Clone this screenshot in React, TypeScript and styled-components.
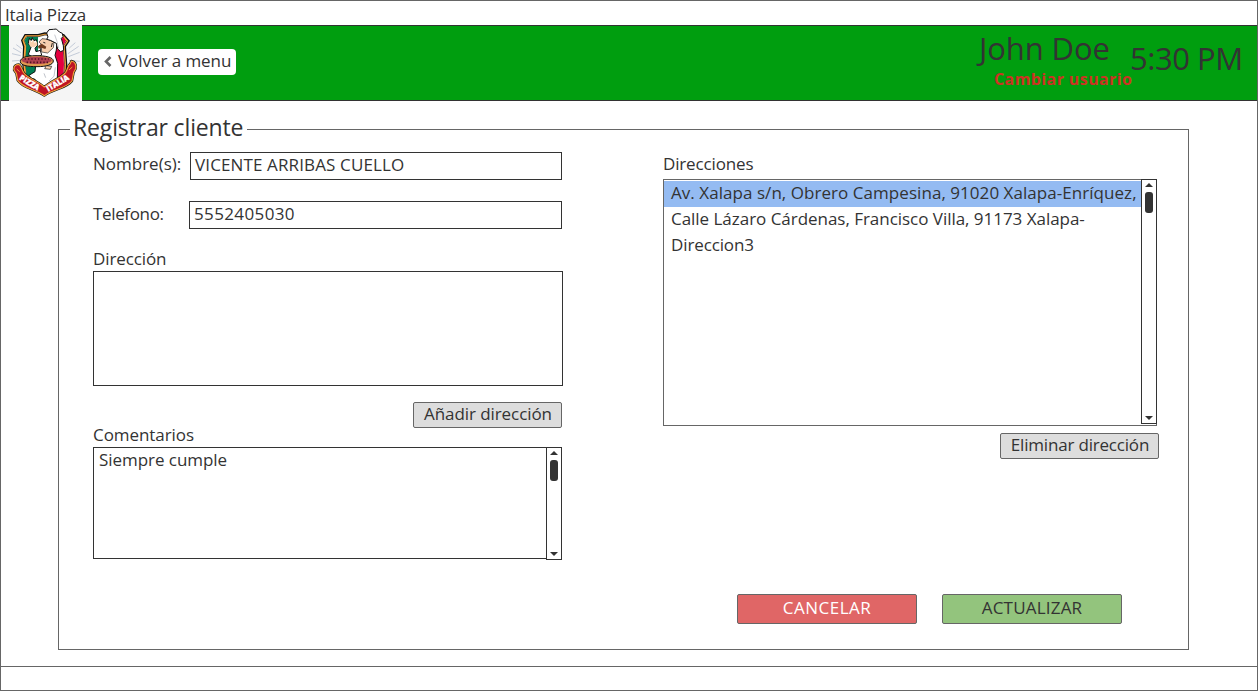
import React from "react";
import styled, { createGlobalStyle } from "styled-components";

const GlobalStyle = createGlobalStyle`
  *, *::before, *::after { box-sizing: border-box; }
  body { margin: 0; background: #fff; }
`;

const ink = "#333333";
const line = "#666666";

const Window = styled.div`
  display: flex;
  flex-direction: column;
  width: 1258px;
  height: 691px;
  border: 1px solid ${line};
  background: #fff;
  color: ${ink};
  font: 17px/20px "Open Sans", "Noto Sans", sans-serif;
  white-space: nowrap;
`;

const TitleBar = styled.div`
  flex: none;
  height: 24px;
  padding: 4px 0 0 4px;
  letter-spacing: -0.13px;
`;

const Header = styled.header`
  flex: none;
  display: flex;
  align-items: flex-start;
  height: 76px;
  padding-left: 8px;
  background: #009e0f;
  box-shadow: inset 0 1px ${ink}, inset 0 -1px ${ink};
`;

const Logo = styled.svg`
  flex: none;
  display: block;
  width: 73px;
  height: 76px;
`;

const BackButton = styled.button`
  display: flex;
  gap: 6px;
  width: 138px;
  height: 26px;
  margin: 24px 0 0 16px;
  padding: 2px 0 0 6px;
  border: 0;
  border-radius: 4px;
  background: #fff;
  color: ${ink};
  font: inherit;
  letter-spacing: -0.06px;
`;

const Chevron = styled.svg`
  width: 8px;
  height: 11px;
  margin-top: 5px;
`;

const Session = styled.div`
  display: flex;
  flex-direction: column;
  width: 161px;
  margin-left: auto;
`;

const UserName = styled.span`
  padding-left: 3px;
  margin-top: 3px;
  font-size: 31px;
  line-height: 40px;
  letter-spacing: -0.1px;
`;

const SwitchUser = styled.a`
  margin-top: 1px;
  padding-left: 18px;
  color: #cc3322;
  font-size: 16px;
  font-weight: 700;
  letter-spacing: 0.4px;
`;

const Clock = styled.span`
  width: 112px;
  margin: 13px 15px 0 -7px;
  font-size: 31px;
  line-height: 40px;
  letter-spacing: -0.45px;
`;

const Main = styled.main`
  flex: 1;
  padding: 16px 68px 0 57px;
`;

const FormBox = styled.fieldset`
  display: flex;
  align-items: flex-start;
  height: 533px;
  margin: 0;
  padding: 0 29px 0 34px;
  border: 1px solid ${line};
`;

const Legend = styled.legend`
  width: 177px;
  margin-left: -23px;
  padding: 0 0 3px 3px;
  font-size: 23px;
  line-height: 21px;
  letter-spacing: -0.15px;
`;

const Column = styled.div<{ $width: number; $left?: number; $top: number }>`
  display: flex;
  flex-direction: column;
  flex: none;
  width: ${p => p.$width}px;
  margin-left: ${p => p.$left ?? 0}px;
  padding-top: ${p => p.$top}px;
`;

const FieldRow = styled.div<{ $gap: number }>`
  display: flex;
  justify-content: space-between;
  width: 469px;
  height: 28px;
  margin-bottom: ${p => p.$gap}px;
`;

const Label = styled.label<{ $track?: number; $top?: number; $gap?: number }>`
  display: block;
  height: 20px;
  margin-top: ${p => p.$top ?? 0}px;
  margin-bottom: ${p => p.$gap ?? 0}px;
  letter-spacing: ${p => p.$track ?? 0}px;
`;

const Input = styled.div<{ $width: number; $track: number }>`
  width: ${p => p.$width}px;
  height: 28px;
  padding: 2px 0 0 4px;
  border: 1px solid ${ink};
  letter-spacing: ${p => p.$track}px;
`;

const TextArea = styled.div<{ $width: number; $height: number }>`
  display: flex;
  justify-content: space-between;
  width: ${p => p.$width}px;
  height: ${p => p.$height}px;
  border: 1px solid ${ink};
`;

const AreaText = styled.span`
  padding: 2px 0 0 5px;
  letter-spacing: -0.05px;
`;

const Button = styled.button<{ $width: number; $height?: number; $bg?: string; $color?: string; $track?: number }>`
  width: ${p => p.$width}px;
  height: ${p => p.$height ?? 26}px;
  padding: 0 0 ${p => (p.$height ? 2 : 3)}px ${p => (p.$height ? 0 : 1)}px;
  border: 1px solid ${line};
  border-radius: 2px;
  background: ${p => p.$bg ?? "#dddddd"};
  color: ${p => p.$color ?? ink};
  font: inherit;
  letter-spacing: ${p => p.$track ?? 0}px;
`;

const AddRow = styled.div`
  display: flex;
  justify-content: flex-end;
  width: 469px;
  margin-top: 16px;
`;

const RemoveRow = styled.div`
  display: flex;
  justify-content: flex-end;
  width: 496px;
  margin-top: 7px;
`;

const Actions = styled.div`
  display: flex;
  gap: 25px;
  margin: 135px 0 0 74px;
`;

const ListBox = styled.div`
  display: flex;
  width: 494px;
  height: 247px;
  border: 1px solid ${line};
`;

const Items = styled.div`
  flex: 1;
  padding-top: 1px;
`;

const Item = styled.div<{ $selected?: boolean; $track?: number }>`
  height: 26px;
  padding: 2px 0 0 7px;
  background: ${p => (p.$selected ? "#94bbf2" : "transparent")};
  letter-spacing: ${p => p.$track ?? 0}px;
`;

const ScrollTrack = styled.div<{ $height: number }>`
  flex: none;
  display: flex;
  flex-direction: column;
  align-items: center;
  width: 16px;
  height: ${p => p.$height}px;
  margin: -1px -1px 0 0;
  padding: 3px 0;
  border: 1px solid ${ink};
  background: #fff;
`;

const Thumb = styled.div`
  width: 8px;
  height: 21px;
  margin: 5px 0 auto;
  border-radius: 3px;
  background: ${ink};
`;

const Arrow = styled.svg`
  flex: none;
  display: block;
  width: 8px;
  height: 4px;
`;

const StatusBar = styled.footer`
  flex: none;
  height: 24px;
  border-top: 1px solid ${line};
`;

function ScrollBar({ height }: { height: number }) {
  return (
    <ScrollTrack $height={height}>
      <Arrow viewBox="0 0 8 4"><path d="M0 4L4 0l4 4z" fill={ink} /></Arrow>
      <Thumb />
      <Arrow viewBox="0 0 8 4"><path d="M0 0l4 4 4-4z" fill={ink} /></Arrow>
    </ScrollTrack>
  );
}

const ribbon =
  "M42 150C40 139 47 133 56 133C65 138 64 148 72 159C84 176 112 182 133 201C154 182 184 174 197 157C204 147 203 135 211 131L214 123C224 125 229 134 227 146L221 157L216 183C200 205 160 207 133 227C106 207 68 205 53 181L49 160Z";

function PizzaLogo() {
  return (
    <Logo viewBox="27 15 219 228" aria-label="Pizza Italia">
      <rect x="27" y="15" width="219" height="228" fill="#f5f5f5" />
      <g stroke="#c3cbd8" strokeWidth="3">
        <path d="M39 84l24 14M36 101l26 6M36 123l26-2M49 74l16 12M236 79l-32 22M239 97l-34 13M239 124l-32-3M226 68l-18 16" />
      </g>
      <path d="M63 61L74 42h40l20-5 40 4 18 1 18 20-12 18 4 54-3 50-65 35-62-34-5-50 2-55z" fill="#111" />
      <path d="M67 61l9-15h38l20-5 40 4 16 1 15 17-11 16 4 54-2 46-62 36-59-34-5-48 3-54z" fill="#f2a23a" />
      <path d="M73 61l7-11h35l20-5 50 6 14 13-10 15 4 54-3 43-56 35-53-33-4-46 3-53z" fill="#fff" stroke="#111" strokeWidth="2" />
      <path d="M74 61l7-10h33v150l-33-23-5-48 3-52z" fill="#007f52" />
      <path d="M158 78l32-28 8 13-10 16 4 54-3 42-32 24z" fill="#e4003f" />
      <path d="M107 121l14-21 2-20 20-16 28-4-2 30-4 16 8 24-1 50-15 22-20 4-24-14-8-14-11-3-7-9 18-11 3-28z" fill="#fff" stroke="#111" strokeWidth="3" />
      <path d="M132 160l5 13M166 142l-4 27-15 14" stroke="#bfc3ca" strokeWidth="3" fill="none" />
      <path d={ribbon} fill="#111" stroke="#111" strokeWidth="7" strokeLinejoin="round" />
      <path d={ribbon} fill="#bf1424" stroke="#f2a23a" strokeWidth="3.5" strokeLinejoin="round" />
      <path d="M50 147l9 8M217 141l-10 9" stroke="#f2a23a" strokeWidth="3" />
      <path d="M85 103l8-21-8-12 3-15 5 7 4-9 4 10 8-4 4 16-8 10 3 10 13-4 4 14-24 9z" fill="#fff" stroke="#111" strokeWidth="3" />
      <path d="M86 70l4-11 5 8 5-8 4 10 7-5 1 11-10 7-11-2z" fill="#f7d0ae" />
      <path d="M117 66l9-10 18 2 18 9-2 16-17 16-18-3-1-14-8-3 8-6z" fill="#f7cfae" stroke="#222" strokeWidth="2" />
      <path d="M114 79l11-8 14 9-3 7-12-4-8 3z" fill="#6e3a1c" />
      <path d="M130 67l6 2M157 69l-3 12" stroke="#222" strokeWidth="3" fill="none" />
      <path d="M140 58l4-7-4-12 7-10 13-1 9-1 9 9 9 4 2 10-5 5 6 22 1 14-9 4-9-8-4-17-18-9z" fill="#fff" stroke="#111" strokeWidth="3" />
      <path d="M164 44l7 20 5 21" stroke="#c8cad0" strokeWidth="3" fill="none" />
      <path d="M61 125c0-12 18-18 47-18s52 5 52 16-20 17-49 17-50-4-50-15z" fill="#e09a50" stroke="#111" strokeWidth="3" />
      <ellipse cx="110" cy="121" rx="45" ry="11" fill="#b04050" />
      <g stroke="#521020" strokeWidth="5" strokeDasharray="4 6">
        <path d="M74 117h72M80 127h66" />
      </g>
      <path d="M139 137l16 2-4 9-17-2z" fill="#f7d0ae" stroke="#111" strokeWidth="2" />
      <g fill="#fff" stroke="#fff" strokeWidth="1" fontFamily="Open Sans, sans-serif" fontWeight="800" fontSize="24">
        <text transform="translate(56 178) rotate(31)" textLength="66" lengthAdjust="spacingAndGlyphs">PIZZA</text>
        <text transform="translate(145 215) rotate(-30)" textLength="74" lengthAdjust="spacingAndGlyphs">ITALIA</text>
      </g>
    </Logo>
  );
}

export default function App() {
  return (
    <>
      <GlobalStyle />
      <Window>
        <TitleBar>Italia Pizza</TitleBar>
        <Header>
          <PizzaLogo />
          <BackButton>
            <Chevron viewBox="0 0 8 11"><path d="M6.5 1L2 5.5l4.5 4.5" fill="none" stroke={line} strokeWidth="2.6" /></Chevron>
            Volver a menu
          </BackButton>
          <Session>
            <UserName>John Doe</UserName>
            <SwitchUser>Cambiar usuario</SwitchUser>
          </Session>
          <Clock>5:30 PM</Clock>
        </Header>
        <Main>
          <FormBox>
            <Legend>Registrar cliente</Legend>
            <Column $width={470} $top={11}>
              <FieldRow $gap={21}>
                <Label $top={2}>Nombre(s):</Label>
                <Input $width={372} $track={0.13}>VICENTE ARRIBAS CUELLO</Input>
              </FieldRow>
              <FieldRow $gap={20}>
                <Label $top={3} $track={-0.35}>Telefono:</Label>
                <Input $width={373} $track={0.37}>5552405030</Input>
              </FieldRow>
              <Label $track={-0.1} $gap={2}>Dirección</Label>
              <TextArea $width={470} $height={115} />
              <AddRow><Button $width={149} $track={-0.08}>Añadir dirección</Button></AddRow>
              <Label $track={-0.06} $top={-3} $gap={2}>Comentarios</Label>
              <TextArea $width={469} $height={112}>
                <AreaText>Siempre cumple</AreaText>
                <ScrollBar height={113} />
              </TextArea>
            </Column>
            <Column $width={496} $left={100} $top={13}>
              <Label $track={-0.15} $gap={5}>Direcciones</Label>
              <ListBox>
                <Items>
                  <Item $selected $track={0.05}>Av. Xalapa s/n, Obrero Campesina, 91020 Xalapa-Enríquez,</Item>
                  <Item $track={-0.03}>Calle Lázaro Cárdenas, Francisco Villa, 91173 Xalapa-</Item>
                  <Item $track={-0.12}>Direccion3</Item>
                </Items>
                <ScrollBar height={245} />
              </ListBox>
              <RemoveRow><Button $width={159} $track={-0.19}>Eliminar dirección</Button></RemoveRow>
              <Actions>
                <Button $width={180} $height={30} $bg="#e06666" $color="#fff" $track={0.5}>CANCELAR</Button>
                <Button $width={180} $height={30} $bg="#93c47d" $track={0.2}>ACTUALIZAR</Button>
              </Actions>
            </Column>
          </FormBox>
        </Main>
        <StatusBar />
      </Window>
    </>
  );
}
